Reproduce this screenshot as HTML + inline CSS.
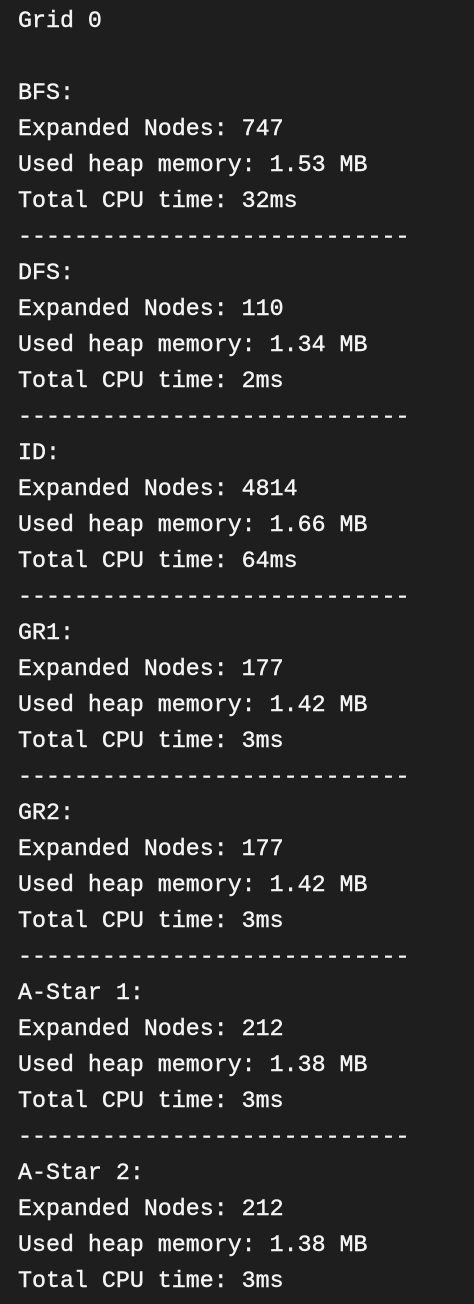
<!DOCTYPE html>
<html><head><meta charset="utf-8"><style>
html,body{margin:0;padding:0;background:#1e1e1e;}
body{width:474px;height:1304px;overflow:hidden;}
pre{margin:0;padding:3px 0 0 18px;font-family:"Liberation Mono",monospace;font-size:23.3px;line-height:36px;color:#f4f4f4;-webkit-text-stroke:0.4px #f4f4f4;}
.d{display:inline-block;transform:scaleX(1.25);transform-origin:left;letter-spacing:-2.8px;}
</style></head><body><pre>Grid 0

BFS:
Expanded Nodes: 747
Used heap memory: 1.53 MB
Total CPU time: 32ms
----------------------------
DFS:
Expanded Nodes: 110
Used heap memory: 1.34 MB
Total CPU time: 2ms
----------------------------
ID:
Expanded Nodes: 4814
Used heap memory: 1.66 MB
Total CPU time: 64ms
----------------------------
GR1:
Expanded Nodes: 177
Used heap memory: 1.42 MB
Total CPU time: 3ms
----------------------------
GR2:
Expanded Nodes: 177
Used heap memory: 1.42 MB
Total CPU time: 3ms
----------------------------
A-Star 1:
Expanded Nodes: 212
Used heap memory: 1.38 MB
Total CPU time: 3ms
----------------------------
A-Star 2:
Expanded Nodes: 212
Used heap memory: 1.38 MB
Total CPU time: 3ms</pre></body></html>
